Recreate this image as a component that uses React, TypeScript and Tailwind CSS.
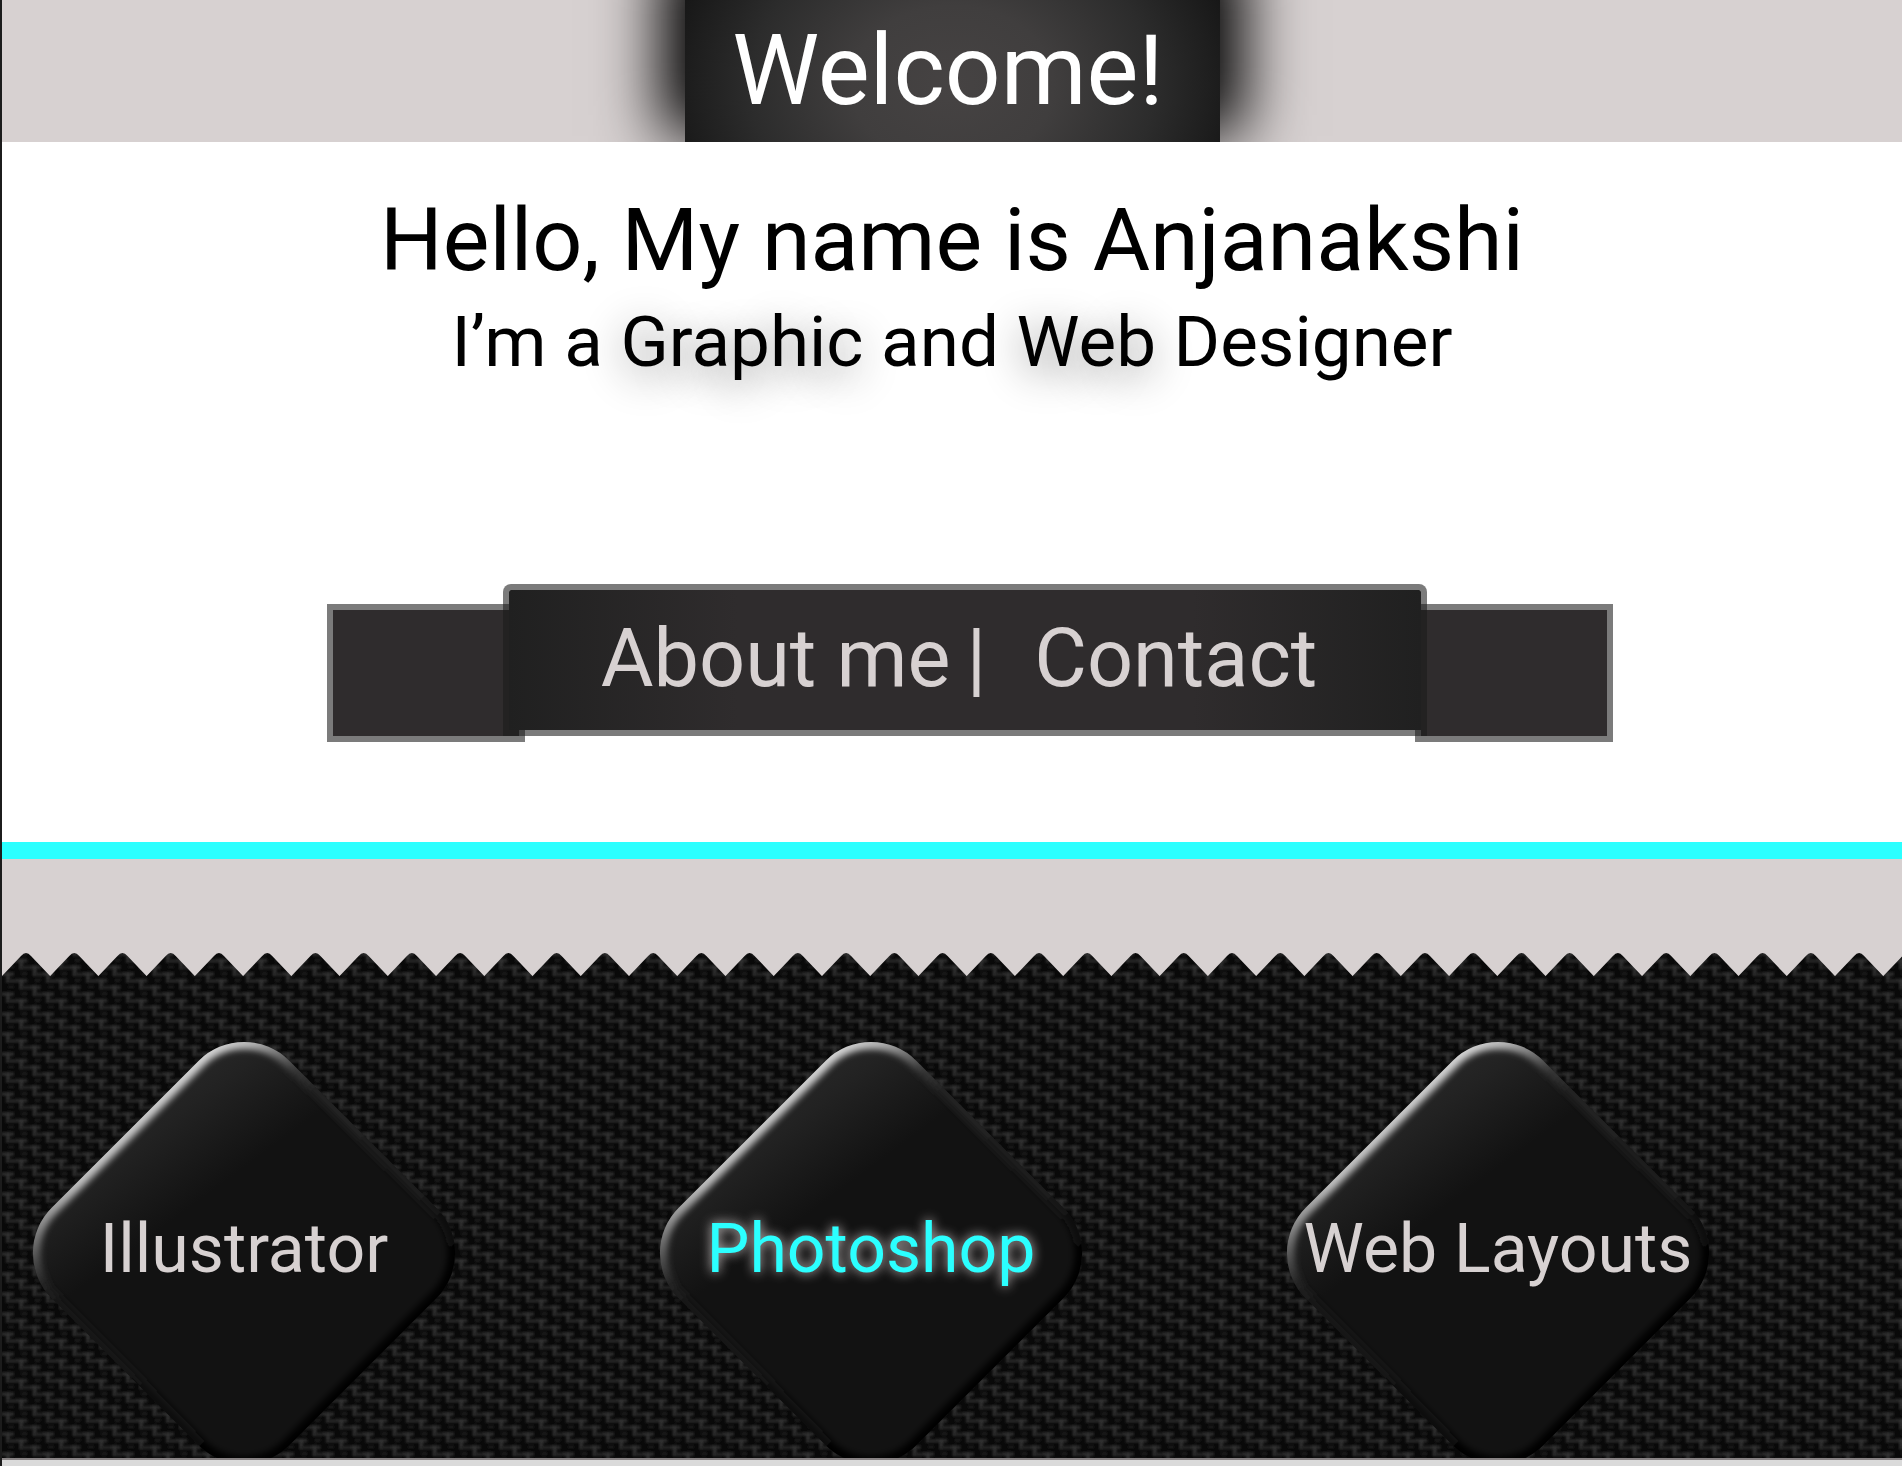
const teeth = Array.from({ length: 60 }, (_, i) => i);

const works = [
  { name: "Illustrator", active: false },
  { name: "Photoshop", active: true },
  { name: "Web Layouts", active: false },
];

// stitches of the cloth, each column sits a third of the tile lower
const stitches = [
  { x: -13.3, y: -6.7 },
  { x: 0, y: 0 },
  { x: 13.3, y: 6.7 },
  { x: 26.6, y: 13.3 },
  { x: 40, y: 20 },
];

function Weave() {
  return (
    <svg className="absolute inset-0 h-full w-full" aria-hidden="true">
      <defs>
        <filter
          id="fuzz"
          filterUnits="userSpaceOnUse"
          x="-20"
          y="-40"
          width="80"
          height="100"
        >
          <feGaussianBlur stdDeviation="0.9" />
        </filter>
        <pattern
          id="weave"
          width="40"
          height="20"
          patternUnits="userSpaceOnUse"
          patternTransform="translate(4 0)"
        >
          <rect width="40" height="20" fill="#090909" />
          <g fill="none" filter="url(#fuzz)">
            {[-40, -20, 0, 20].map((top) =>
              stitches.map((s) => (
                <g
                  key={`${top}-${s.x}`}
                  transform={`translate(${s.x} ${s.y + top})`}
                >
                  <path d="M-4 2h12" stroke="#272727" strokeWidth="4" />
                  <path d="M2 0v11" stroke="#2f2f2f" strokeWidth="4" />
                  <path d="M2 9h7" stroke="#232323" strokeWidth="4" />
                  <path d="M2 15h6" stroke="#1d1d1d" strokeWidth="3" />
                </g>
              ))
            )}
          </g>
        </pattern>
        <clipPath id="zigzag">
          <rect y="25" width="100%" height="100%" />
          {teeth.map((i) => (
            <path
              key={i}
              transform={`translate(${i * 48.24} 0)`}
              d="M-1 25 L19 4 Q24 -2 29 4 L49 25 L49 30 L-1 30 Z"
            />
          ))}
        </clipPath>
      </defs>
      <rect
        width="100%"
        height="100%"
        fill="url(#weave)"
        clipPath="url(#zigzag)"
      />
    </svg>
  );
}

function Diamond() {
  return (
    <svg
      viewBox="0 0 424 424"
      className="col-start-1 row-start-1 h-[424px] w-[424px]"
      aria-hidden="true"
    >
      <defs>
        <linearGradient id="face" x1="0" y1="0" x2="1" y2="0.15">
          <stop offset="0" stopColor="#282828" />
          <stop offset="0.12" stopColor="#222222" />
          <stop offset="0.36" stopColor="#121212" />
        </linearGradient>
        <linearGradient
          id="edge"
          gradientUnits="userSpaceOnUse"
          x1="44"
          y1="44"
          x2="380"
          y2="71"
        >
          <stop offset="0" stopColor="#d8d8d8" />
          <stop offset="0.08" stopColor="#b4b4b4" />
          <stop offset="0.22" stopColor="#383838" />
          <stop offset="0.3" stopColor="#242424" />
          <stop offset="0.75" stopColor="#1a1a1a" />
          <stop offset="0.96" stopColor="#020202" />
        </linearGradient>
        <linearGradient id="shade" x1="0" y1="0" x2="0" y2="1">
          <stop offset="0.7" stopColor="#000" stopOpacity="0" />
          <stop offset="1" stopColor="#000" stopOpacity="0.4" />
        </linearGradient>
        <clipPath id="shape">
          <rect x="44" y="44" width="336" height="336" rx="64" />
        </clipPath>
        <filter id="soft">
          <feGaussianBlur stdDeviation="3" />
        </filter>
      </defs>
      <g transform="rotate(45 212 212)">
        <g clipPath="url(#shape)">
          <rect x="44" y="44" width="336" height="336" fill="url(#face)" />
          <g filter="url(#soft)" fill="none" strokeWidth="15">
            <rect x="44" y="44" width="336" height="336" rx="64" stroke="url(#edge)" />
            <rect x="44" y="44" width="336" height="336" rx="64" stroke="url(#shade)" />
          </g>
        </g>
      </g>
    </svg>
  );
}

export default function App() {
  return (
    <div className="overflow-hidden border-l-2 border-[#1c1c1c] bg-white font-[Roboto,sans-serif]">
      <header className="flex h-[142px] justify-center overflow-hidden bg-[#d7d1d1]">
        <div className="w-[535px] bg-[radial-gradient(ellipse_54%_160%_at_50%_60%,#464343_0%,#403e3e_35%,#2c2c2c_70%,#171717_100%)] shadow-[0_-30px_60px_24px_#000]">
          <h1 className="pt-3 pr-2 text-center text-[98px] leading-[118px] text-white">
            Welcome!
          </h1>
        </div>
      </header>

      <main>
        <section className="flex h-[442px] flex-col items-center pt-12 text-center text-black">
          <h2 className="text-[88px] leading-[100px]">
            Hello, My name is Anjanakshi
          </h2>
          <p className="text-[71px] leading-[104px]">
            I’m a{" "}
            <span className="[text-shadow:0_10px_40px_#888]">Graphic</span> and{" "}
            <span className="[text-shadow:0_10px_40px_#888]">Web</span> Designer
          </p>
        </section>

        <section className="flex h-[258px] items-start justify-center pl-9">
          <div className="mt-5 -mr-[22px] h-[138px] w-[198px] border-[6px] border-[#7b7b7b] bg-[#2f2c2d]"></div>
          <nav className="relative flex h-[152px] w-[924px] items-start justify-center rounded-t-lg border-[6px] border-[#1c1c1c]/58 bg-[linear-gradient(to_right,#202020,#2f2c2d_25%,#2f2c2d_75%,#202020)] bg-clip-padding pr-3 text-[81px] leading-[138px] text-[#d7d1d1]">
            <a href="#about">About me</a>
            <span className="pr-12 pl-4">|</span>
            <a href="#contact">Contact</a>
          </nav>
          <div className="mt-5 -ml-3 h-[138px] w-[198px] border-[6px] border-[#7b7b7b] bg-[#2f2c2d]"></div>
        </section>

        <div className="h-[17px] bg-[#2bffff]"></div>
        <div className="h-[93px] bg-[#d7d1d1]"></div>

        <section className="relative h-[506px] overflow-hidden bg-[#d7d1d1]">
          <Weave />
          <div className="relative flex pt-[89px]">
            {works.map((work) => (
              <a
                key={work.name}
                href="#work"
                className="grid shrink-0 basis-[33%] grid-cols-[424px] items-center pl-[30px] text-center text-[68px] leading-[80px] whitespace-nowrap"
              >
                <Diamond />
                <span
                  className={
                    work.active
                      ? "z-10 col-start-1 row-start-1 pb-2 text-[#2bffff] [text-shadow:0_0_12px_#d7d1d1]"
                      : "z-10 col-start-1 row-start-1 pb-2 text-[#d7d1d1]"
                  }
                >
                  {work.name}
                </span>
              </a>
            ))}
          </div>
        </section>
      </main>

      <footer className="h-2 border-t-2 border-[#888384] bg-[#dadada]"></footer>
    </div>
  );
}
